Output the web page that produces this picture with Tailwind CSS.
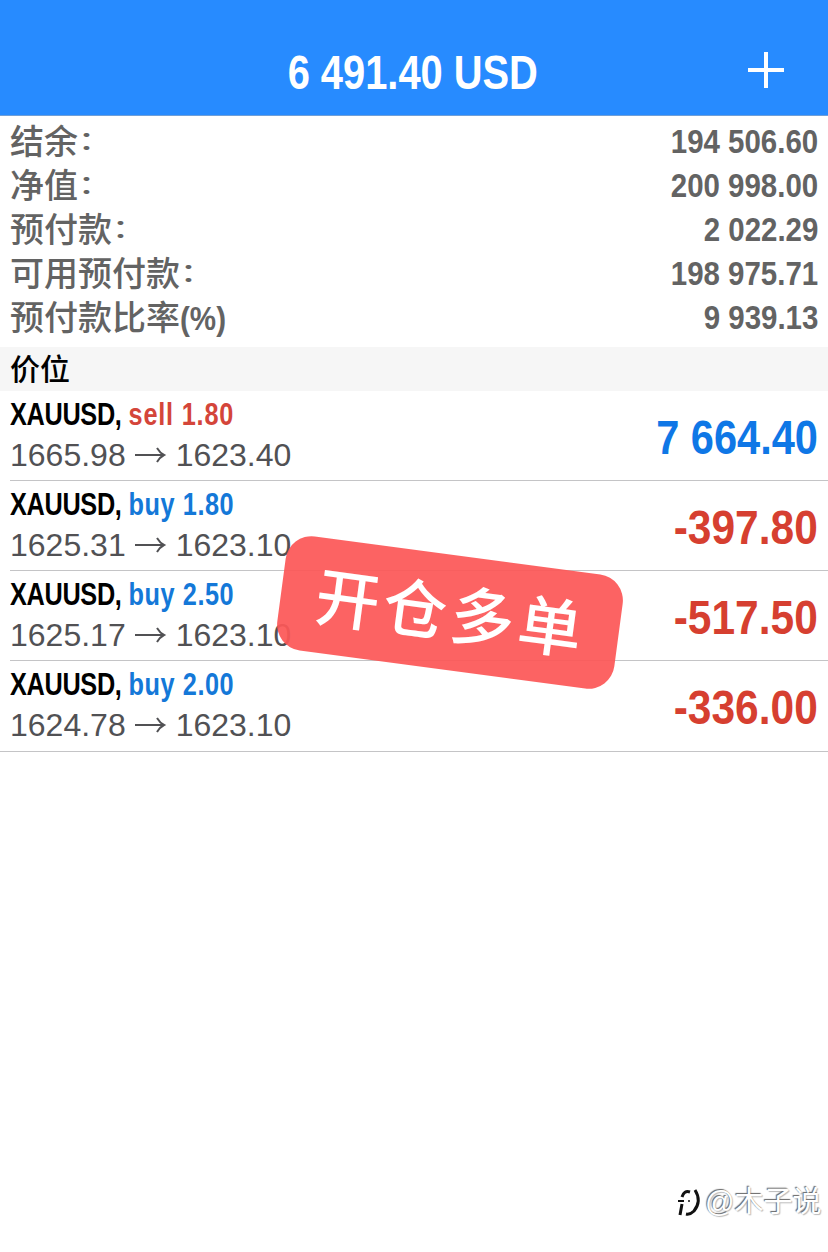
<!DOCTYPE html>
<html lang="zh-CN">
  <head>
    <meta charset="UTF-8" />
    <meta name="viewport" content="width=device-width, initial-scale=1.0" />
    <title>6 491.40 USD</title>
    <script src="https://cdn.jsdelivr.net/npm/@tailwindcss/browser@4"></script>
  </head>
  <body class="bg-white">
    <main
      class="relative h-[1252px] w-[828px] overflow-hidden font-['Liberation_Sans','Noto_Sans_CJK_SC',sans-serif]"
    >
      <header
        class="grid h-[116px] grid-cols-[1fr_auto_1fr] items-center border-b border-[#6f9fd8] bg-[#278bff] pt-[29px] text-white"
      >
        <span></span>
        <h1 class="mt-[2px] mr-[3px] origin-center scale-x-[0.83] text-[48px] leading-[60px] font-bold">
          6 491.40 USD
        </h1>
        <button class="mr-[43px] justify-self-end" aria-label="Add">
          <svg class="mb-[5px] block h-[38px] w-[38px]" viewBox="0 0 38 38">
            <path d="M1 19h36M19 1v36" stroke="white" stroke-width="4" />
          </svg>
        </button>
      </header>

      <!-- Account summary -->
      <dl class="h-[231px] px-[10px] pt-[4px] text-[34px] leading-[44px] text-[#636363]">
        <div class="flex h-[44px] justify-between">
          <dt class="font-medium">结余<span class="inline-block -translate-y-px scale-y-[0.7]">：</span></dt>
          <dd class="-mt-px origin-right scale-x-[0.866] font-bold">194 506.60</dd>
        </div>
        <div class="flex h-[44px] justify-between">
          <dt class="font-medium">净值<span class="inline-block -translate-y-px scale-y-[0.7]">：</span></dt>
          <dd class="-mt-px origin-right scale-x-[0.866] font-bold">200 998.00</dd>
        </div>
        <div class="flex h-[44px] justify-between">
          <dt class="font-medium">预付款<span class="inline-block -translate-y-px scale-y-[0.7]">：</span></dt>
          <dd class="-mt-px origin-right scale-x-[0.866] font-bold">2 022.29</dd>
        </div>
        <div class="flex h-[44px] justify-between">
          <dt class="font-medium">可用预付款<span class="inline-block -translate-y-px scale-y-[0.7]">：</span></dt>
          <dd class="-mt-px origin-right scale-x-[0.866] font-bold">198 975.71</dd>
        </div>
        <div class="flex h-[44px] justify-between">
          <dt class="font-medium">预付款比率<span class="inline-block origin-left scale-x-[0.87] font-bold">(%)</span></dt>
          <dd class="-mt-px origin-right scale-x-[0.866] font-bold">9 939.13</dd>
        </div>
      </dl>

      <h2 class="h-[44px] bg-[#f6f6f6] pl-[10px] text-[30px] leading-[46px] font-medium text-black">
        价位
      </h2>

      <!-- Open positions -->
      <ul>
        <li class="ml-[10px] flex h-[90px] items-center justify-between border-b border-[#c4c4c6] pr-[10px]">
          <div class="pb-px">
            <p class="origin-left scale-x-[0.79] text-[32px] leading-[41px] font-bold text-black">
              <span class="tracking-[-0.4px]">XAUUSD,</span> <span class="tracking-[1px] text-[#d4453a]">sell 1.80</span>
            </p>
            <p class="flex items-center text-[32px] leading-[41px] text-[#515154]">
              1665.98
              <svg class="mx-[9px] h-[20px] w-[32px]" viewBox="0 0 32 20" fill="none" stroke="currentColor" stroke-width="2">
                <path d="M0 9h29M22 2q3 5 7 7q-4 2-7 7" />
              </svg>
              1623.40
            </p>
          </div>
          <span class="mt-[4px] origin-right scale-x-[0.865] text-[48px] font-bold text-[#0f77e6]">7 664.40</span>
        </li>
        <li class="ml-[10px] flex h-[90px] items-center justify-between border-b border-[#c4c4c6] pr-[10px]">
          <div class="pb-px">
            <p class="origin-left scale-x-[0.79] text-[32px] leading-[41px] font-bold text-black">
              <span class="tracking-[-0.4px]">XAUUSD,</span> <span class="tracking-[0.7px] text-[#1478d8]">buy 1.80</span>
            </p>
            <p class="flex items-center text-[32px] leading-[41px] text-[#515154]">
              1625.31
              <svg class="mx-[9px] h-[20px] w-[32px]" viewBox="0 0 32 20" fill="none" stroke="currentColor" stroke-width="2">
                <path d="M0 9h29M22 2q3 5 7 7q-4 2-7 7" />
              </svg>
              1623.10
            </p>
          </div>
          <span class="mt-[4px] origin-right scale-x-[0.885] text-[48px] font-bold text-[#d63f30]">-397.80</span>
        </li>
        <li class="ml-[10px] flex h-[90px] items-center justify-between border-b border-[#c4c4c6] pr-[10px]">
          <div class="pb-px">
            <p class="origin-left scale-x-[0.79] text-[32px] leading-[41px] font-bold text-black">
              <span class="tracking-[-0.4px]">XAUUSD,</span> <span class="tracking-[0.7px] text-[#1478d8]">buy 2.50</span>
            </p>
            <p class="flex items-center text-[32px] leading-[41px] text-[#515154]">
              1625.17
              <svg class="mx-[9px] h-[20px] w-[32px]" viewBox="0 0 32 20" fill="none" stroke="currentColor" stroke-width="2">
                <path d="M0 9h29M22 2q3 5 7 7q-4 2-7 7" />
              </svg>
              1623.10
            </p>
          </div>
          <span class="mt-[4px] origin-right scale-x-[0.885] text-[48px] font-bold text-[#d63f30]">-517.50</span>
        </li>
        <li class="flex h-[91px] items-center justify-between border-b border-[#c4c4c6] pr-[10px] pl-[10px]">
          <div class="pb-[2px]">
            <p class="origin-left scale-x-[0.79] text-[32px] leading-[41px] font-bold text-black">
              <span class="tracking-[-0.4px]">XAUUSD,</span> <span class="tracking-[0.7px] text-[#1478d8]">buy 2.00</span>
            </p>
            <p class="flex items-center text-[32px] leading-[41px] text-[#515154]">
              1624.78
              <svg class="mx-[9px] h-[20px] w-[32px]" viewBox="0 0 32 20" fill="none" stroke="currentColor" stroke-width="2">
                <path d="M0 9h29M22 2q3 5 7 7q-4 2-7 7" />
              </svg>
              1623.10
            </p>
          </div>
          <span class="mt-[4px] origin-right scale-x-[0.885] text-[48px] font-bold text-[#d63f30]">-336.00</span>
        </li>
      </ul>

      <!-- Sticker -->
      <div
        class="absolute top-[555px] left-[280px] flex h-[115px] w-[340px] rotate-[7.6deg] items-center justify-center rounded-[26px] bg-[#fc5757]/93 pt-[5px] pl-[2px] text-[64px] leading-none font-medium tracking-[4px] text-white"
      >
        开仓多单
      </div>

      <!-- Watermark -->
      <div
        class="absolute top-[1180px] left-[676px] flex items-center text-[29px] leading-[44px] text-white [text-shadow:-1px_-1px_1px_#666,1px_1px_1px_#bbb]"
      >
        <svg class="h-[34px] w-[29px]" viewBox="0 0 29 34" fill="none" stroke="#111">
          <path d="M14 7q-6-2-8 5M6 19l-2 11" stroke-width="3" />
          <path d="M2 16h6" stroke-width="2" />
          <path d="M19 5q7 11-1 21q-4 4-8 3" stroke-width="3" />
          <path d="M12 16h2" stroke-width="1.5" />
        </svg>
        @木子说
      </div>
    </main>
  </body>
</html>
